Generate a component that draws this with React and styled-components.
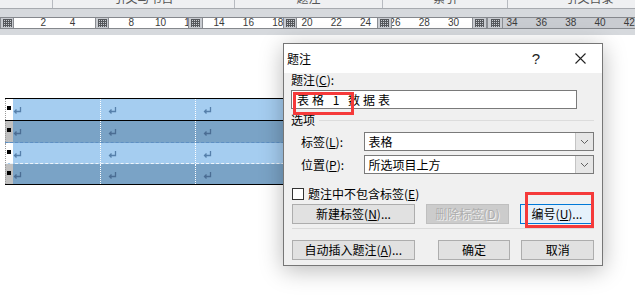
import React from "react";
import styled, { createGlobalStyle } from "styled-components";

const GlobalStyle = createGlobalStyle`
  html, body {
    margin: 0;
    padding: 0;
    background: #ffffff;
  }
  body {
    font-family: "Noto Sans CJK SC", "Liberation Sans", sans-serif;
    font-size: 12px;
    color: #000;
  }
`;

const Page = styled.div`
  position: relative;
  width: 635px;
  height: 308px;
  overflow: hidden;
  background: #ffffff;
`;

const TabHeader = styled.div`
  display: flex;
  height: 8px;
  background: #eff0f2;
  border-bottom: 1px solid #a7aaaf;
  overflow: hidden;
`;

const TabCell = styled.div`
  flex: 0 0 ${(p) => p.$w}px;
  height: 8px;
  border-right: 1px solid #b7bac0;
  box-sizing: border-box;
  overflow: hidden;
  text-align: center;
  color: #555;
  font-size: 12px;
  line-height: 12px;

  span {
    display: block;
    margin-top: -8px;
  }
`;

const Band = styled.div`
  background: #d6d9dd;
  padding: 8px 0 6px;
`;

const RulerBar = styled.div`
  position: relative;
  display: flex;
  height: 10px;
  border-top: 1px solid #85888d;
  border-bottom: 1px solid #85888d;
  background: #c9ccd1;
`;

const RulerSpan = styled.div`
  flex: 0 0 ${(p) => p.$w}px;
  background: #ffffff;
`;

const RulerRest = styled.div`
  flex: 1;
  background: #c9ccd1;
`;

const Marker = styled.div`
  position: relative;
  z-index: 2;
  flex: 0 0 ${(p) => p.$w}px;
  box-sizing: border-box;
  background: #c9ccd1;
  border-left: 1px solid #8a8d92;
  border-right: 1px solid #8a8d92;
  display: flex;
  align-items: center;
  justify-content: center;
`;

const Tick = styled.span`
  position: absolute;
  top: -1px;
  z-index: 1;
  transform: translateX(-50%);
  font-family: "Liberation Sans", sans-serif;
  font-size: 10px;
  line-height: 11px;
  color: #3a3a3a;
`;

const Doc = styled.div`
  padding: 63px 0 0 5px;
`;

const Table = styled.div`
  width: 380px;
  border-top: 1px solid #000;
`;

const Row = styled.div`
  display: flex;
  height: ${(p) => p.$h}px;
  background: ${(p) => (p.$dark ? "#7aa3c6" : "#a5cdf0")};
  border-bottom: 1px ${(p) => p.$line} ${(p) => p.$lineColor};
`;

const Stub = styled.div`
  flex: 0 0 8px;
  box-sizing: border-box;
  border-left: 1px dotted #9a9a9a;
  background: ${(p) => (p.$dark ? "#c0c0c0" : "#ffffff")};
  padding: 7px 0 0 1px;
`;

const Handle = styled.div`
  width: 4px;
  height: 4px;
  background: #000;
`;

const Cell = styled.div`
  flex: 0 0 ${(p) => p.$w}px;
  box-sizing: border-box;
  padding: 8px 0 0 ${(p) => (p.$first ? 0 : 7)}px;
  border-left: ${(p) => (p.$first ? "none" : "1px dotted #ffffff")};
`;

const Dialog = styled.div`
  position: absolute;
  left: 283px;
  top: 43px;
  width: 320px;
  height: 223px;
  box-sizing: border-box;
  border: 1px solid #767676;
  background: #f0f0f0;
  box-shadow: 0 4px 22px rgba(0, 0, 0, 0.28);
`;

const TitleBar = styled.div`
  display: flex;
  align-items: center;
  height: 29px;
  background: #ffffff;
  padding-left: 3px;
  font-size: 12px;
`;

const TitleText = styled.div`
  flex: 1;
`;

const TitleButton = styled.div`
  width: 44px;
  text-align: center;
  font-family: "Liberation Sans", sans-serif;
  font-size: 15px;
  color: #222;
  display: flex;
  justify-content: center;
`;

const Body = styled.div`
  padding: 0 8px 0 7px;
`;

const Label = styled.div`
  height: 14px;
  line-height: 14px;
  white-space: pre;
  padding-left: ${(p) => p.$indent || 0}px;
`;

const Key = styled.span`
  text-decoration: underline;
  text-underline-offset: 1px;
`;

const TextBox = styled.div`
  margin-top: 3px;
  width: 286px;
  height: 19px;
  box-sizing: border-box;
  border: 1px solid #7a7a7a;
  background: #ffffff;
  padding-left: 5px;
  line-height: 17px;
  letter-spacing: 3px;
  white-space: pre;
`;

const Group = styled.div`
  display: flex;
  align-items: center;
  gap: 4px;
  margin-top: 4px;
  height: 14px;
  line-height: 14px;

  &::after {
    content: "";
    flex: 1;
    height: 1px;
    background: #dcdcdc;
  }
`;

const FieldRow = styled.div`
  display: flex;
  align-items: center;
  margin-top: ${(p) => p.$mt}px;
  height: 19px;
`;

const FieldLabel = styled.div`
  width: 66px;
  padding-left: 10px;
  line-height: 14px;
`;

const Select = styled.div`
  display: flex;
  width: 239px;
  height: 19px;
  box-sizing: border-box;
  border: 1px solid #7a7a7a;
  background: #ffffff;
`;

const SelectValue = styled.div`
  flex: 1;
  padding-left: 3px;
  line-height: 17px;
`;

const SelectArrow = styled.div`
  width: 17px;
  background: #e6e6e6;
  border-left: 1px solid #c4c4c4;
  display: flex;
  align-items: center;
  justify-content: center;
`;

const CheckRow = styled.div`
  display: flex;
  align-items: center;
  gap: 4px;
  margin-top: 14px;
  padding-left: 1px;
  height: 12px;
  line-height: 14px;
`;

const Box = styled.div`
  width: 12px;
  height: 12px;
  box-sizing: border-box;
  border: 1px solid #333;
  background: #fff;
`;

const ButtonRow = styled.div`
  display: flex;
  gap: ${(p) => p.$gap}px;
  margin-top: ${(p) => p.$mt}px;
  padding-left: 1px;
`;

const Button = styled.div`
  width: ${(p) => p.$w}px;
  height: 20px;
  box-sizing: border-box;
  margin-left: ${(p) => p.$ml || 0}px;
  border: 1px solid ${(p) => (p.$focus ? "#0078d7" : p.$disabled ? "#bfbfbf" : "#adadad")};
  background: ${(p) => (p.$focus ? "#e5f1fb" : p.$disabled ? "#cccccc" : "#e1e1e1")};
  color: ${(p) => (p.$disabled ? "#adadad" : "#000")};
  text-shadow: ${(p) => (p.$disabled ? "1px 1px 0 #f2f2f2" : "none")};
  text-align: center;
  line-height: 18px;
  white-space: pre;
`;

const Divider = styled.div`
  margin: 4px 0 0 1px;
  height: 1px;
  background: #dadada;
`;

const Highlight = styled.div`
  position: absolute;
  left: ${(p) => p.$x}px;
  top: ${(p) => p.$y}px;
  width: ${(p) => p.$w}px;
  height: ${(p) => p.$h}px;
  box-sizing: border-box;
  border: 3px solid #f53a3a;
  pointer-events: none;
`;

const GridGlyph = () => (
  <svg width="9" height="8" viewBox="0 0 9 8">
    {[0, 2, 4, 6, 8].map((x) => (
      <line key={"v" + x} x1={x + 0.5} y1="0" x2={x + 0.5} y2="8" stroke="#55585c" strokeWidth="1" />
    ))}
    {[0, 2, 4, 6].map((y) => (
      <line key={"h" + y} x1="0" y1={y + 0.5} x2="9" y2={y + 0.5} stroke="#55585c" strokeWidth="1" />
    ))}
  </svg>
);

const ReturnMark = ({ dark }) => (
  <svg width="9" height="7" viewBox="0 0 9 7" style={{ display: "block" }}>
    <path
      d="M7.5 0 V4.5 H1.5 M3.5 2.5 L1.5 4.5 L3.5 6.5"
      fill="none"
      stroke={dark ? "#4b6d93" : "#5680ab"}
      strokeWidth="1.3"
    />
  </svg>
);

const Chevron = () => (
  <svg width="9" height="6" viewBox="0 0 9 6">
    <path d="M1 1 L4.5 4.5 L8 1" fill="none" stroke="#606060" strokeWidth="1" />
  </svg>
);

const CloseX = () => (
  <svg width="11" height="11" viewBox="0 0 11 11">
    <path d="M0.5 0.5 L10.5 10.5 M10.5 0.5 L0.5 10.5" stroke="#222" strokeWidth="1.1" />
  </svg>
);

const tabs = [
  { w: 53, text: "" },
  { w: 182, text: "引文与书目" },
  { w: 148, text: "题注" },
  { w: 125, text: "索引" },
  { w: 164, text: "引文目录" },
];

const rulerParts = [
  ["m", 14], ["s", 81], ["m", 14], ["s", 79], ["m", 15], ["s", 80],
  ["m", 14], ["s", 80], ["m", 15], ["s", 80], ["m", 15], ["m", 16],
];

const tickValues = [2, 4, 8, 10, 12, 14, 16, 18, 20, 22, 24, 26, 28, 30, 34, 36, 38, 40, 42];

const rows = [
  { dark: false, h: 21, line: "solid", color: "#000000" },
  { dark: true, h: 21, line: "dashed", color: "#5d8fc4" },
  { dark: false, h: 20, line: "dashed", color: "#eef4fa" },
  { dark: true, h: 20, line: "solid", color: "#000000" },
];

const cols = [87, 95, 95, 95];

export default function App() {
  return (
    <Page>
      <GlobalStyle />
      <TabHeader>
        {tabs.map((t, i) => (
          <TabCell key={i} $w={t.w}>
            <span>{t.text}</span>
          </TabCell>
        ))}
      </TabHeader>

      <Band>
        <RulerBar>
          {rulerParts.map(([kind, w], i) =>
            kind === "m" ? (
              <Marker key={i} $w={w}>
                <GridGlyph />
              </Marker>
            ) : (
              <RulerSpan key={i} $w={w} />
            )
          )}
          <RulerRest />
          {tickValues.map((n) => (
            <Tick key={n} style={{ left: 14 + n * 14.65 }}>
              {n}
            </Tick>
          ))}
        </RulerBar>
      </Band>

      <Doc>
        <Table>
          {rows.map((r, i) => (
            <Row key={i} $dark={r.dark} $h={r.h} $line={r.line} $lineColor={r.color}>
              <Stub $dark={r.dark}>
                <Handle />
              </Stub>
              {cols.map((w, j) => (
                <Cell key={j} $w={w} $first={j === 0}>
                  <ReturnMark dark={r.dark} />
                </Cell>
              ))}
            </Row>
          ))}
        </Table>
      </Doc>

      <Dialog>
        <TitleBar>
          <TitleText>题注</TitleText>
          <TitleButton>?</TitleButton>
          <TitleButton>
            <CloseX />
          </TitleButton>
        </TitleBar>
        <Body>
          <Label>
            题注(<Key>C</Key>):
          </Label>
          <TextBox>表格 1 数据表</TextBox>
          <Group>选项</Group>
          <FieldRow $mt={5}>
            <FieldLabel>
              标签(<Key>L</Key>):
            </FieldLabel>
            <Select>
              <SelectValue>表格</SelectValue>
              <SelectArrow>
                <Chevron />
              </SelectArrow>
            </Select>
          </FieldRow>
          <FieldRow $mt={4}>
            <FieldLabel>
              位置(<Key>P</Key>):
            </FieldLabel>
            <Select>
              <SelectValue>所选项目上方</SelectValue>
              <SelectArrow>
                <Chevron />
              </SelectArrow>
            </Select>
          </FieldRow>
          <CheckRow>
            <Box />
            <span>
              题注中不包含标签(<Key>E</Key>)
            </span>
          </CheckRow>
          <ButtonRow $gap={11} $mt={4}>
            <Button $w={123}>
              新建标签(<Key>N</Key>)...
            </Button>
            <Button $w={83} $disabled>
              删除标签(<Key>D</Key>)
            </Button>
            <Button $w={74} $focus>
              编号(<Key>U</Key>)...
            </Button>
          </ButtonRow>
          <Divider />
          <ButtonRow $gap={11} $mt={11}>
            <Button $w={123}>
              自动插入题注(<Key>A</Key>)...
            </Button>
            <Button $w={73} $ml={12}>
              确定
            </Button>
            <Button $w={73}>取消</Button>
          </ButtonRow>
        </Body>
        <Highlight $x={9} $y={48} $w={61} $h={23} />
        <Highlight $x={241} $y={148} $w={69} $h={36} />
      </Dialog>
    </Page>
  );
}
